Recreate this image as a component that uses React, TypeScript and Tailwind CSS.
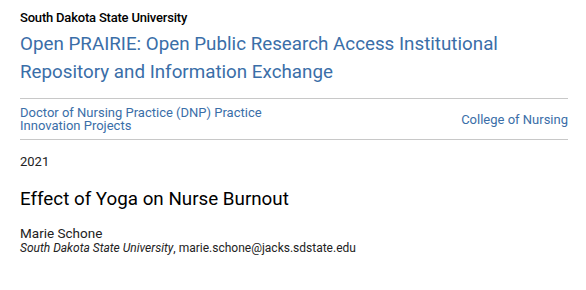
export default function App() {
  return (
    <div className="h-[290px] w-[586px] bg-white font-['Roboto',sans-serif]">
      <div className="w-[568px] pl-5 pt-[10px]">
        <p className="text-[13px] font-medium leading-[16px] tracking-[-0.2px] text-black">
          South Dakota State University
        </p>
        <h1 className="mt-[4px] text-[18.8px] leading-[28px] text-[#3a6ea8]">
          Open PRAIRIE: Open Public Research Access Institutional Repository and Information Exchange
        </h1>
        <div className="mt-[12px] flex items-center justify-between border-y border-[#c8c8c8] py-[7px] text-[13px] leading-[13px] text-[#3a6ea8]">
          <span className="w-[248px]">Doctor of Nursing Practice (DNP) Practice Innovation Projects</span>
          <span>College of Nursing</span>
        </div>
        <p className="mt-[14px] text-[13px] leading-[16px] text-[#222]">2021</p>
        <h2 className="mt-[16px] text-[18.8px] leading-[26px] text-black">Effect of Yoga on Nurse Burnout</h2>
        <p className="mt-[13px] text-[13.5px] leading-[16px] text-[#222]">Marie Schone</p>
        <p className="text-[12px] leading-[15px] text-[#222]">
          <i>South Dakota State University</i>, marie.schone@jacks.sdstate.edu
        </p>
      </div>
    </div>
  );
}
